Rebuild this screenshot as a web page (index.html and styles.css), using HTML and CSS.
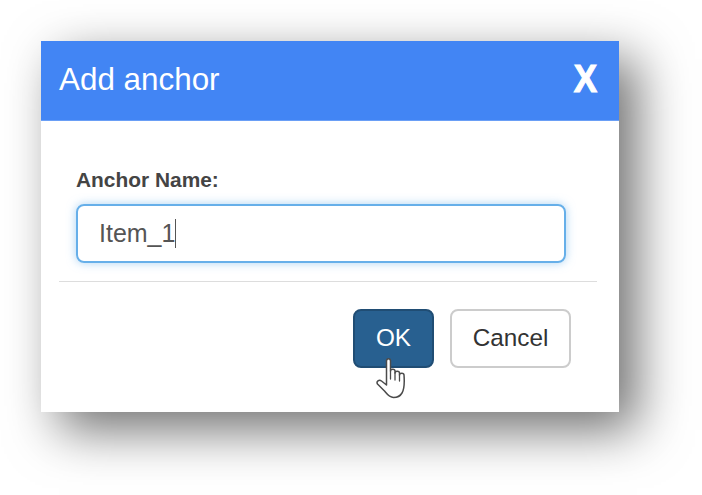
FILE: index.html
```html
<!DOCTYPE html>
<html lang="en">
<head>
  <meta charset="UTF-8" />
  <title>Add anchor</title>
  <link rel="stylesheet" href="styles.css">
</head>
<body>

  <div class="dialog">
    <div class="dialog-header">
      <div class="dialog-title">Add anchor</div>
      <div class="dialog-close">X</div>
    </div>

    <div class="dialog-body">
      <div class="field-label">Anchor Name:</div>
      <div class="field-input">Item_1<span class="caret"></span></div>
    </div>

    <div class="dialog-footer">
      <div class="btn btn-ok">
        OK
        <svg class="hand" width="32" height="41" viewBox="0 0 32 41">
          <path d="M10.5 3c0-3 4-3 4 0v10c0-2.5 4.5-2.5 4.5 0v2c0-2.5 4.5-2.5 4.5 0v2c0-2.5 4.5-2.5 4.5 0 0.5 7 1 13-2 18-2 3.500-5 4.500-8.500 4.500-4.500 0-6.500-3.500-9-6.500l-7-7c-1.500-2.500 1.500-5 4-3l5 4z" fill="#fff" stroke="#4b4b4b" stroke-width="1.5" stroke-linejoin="round"/>
          <path d="M14.500 13v8M19 15v7M23.500 17v6" fill="none" stroke="#4b4b4b" stroke-width="1.300" stroke-linecap="round"/>
        </svg>
      </div>
      <div class="btn btn-cancel">Cancel</div>
    </div>
  </div>

</body>
</html>
```

FILE: styles.css
```css
html {
  height: 100%;
}

body {
  box-sizing: border-box;
  height: 100%;
  margin: 0;
  padding: 41px;
  background: #fff;
  font-family: "Liberation Sans", Arial, sans-serif;
}

.dialog {
  width: 578px;
  height: 371px;
  background: #fff;
  box-shadow: 18px 18px 48px rgba(0, 0, 0, 0.56);
}

.dialog-header {
  display: flex;
  align-items: center;
  justify-content: space-between;
  box-sizing: border-box;
  height: 80px;
  padding: 0 22px 2px 18px;
  background: #4285f4;
  border-bottom: 1px solid #6a9ff6;
  color: #fff;
}

.dialog-title {
  font-size: 31.4px;
}

.dialog-close {
  margin-bottom: 3px;
  font-size: 35px;
  font-weight: 700;
  -webkit-text-stroke: 1px #fff;
  transform: scaleY(1.13);
}

.dialog-body {
  height: 161px;
  margin: 0 22px 0 18px;
  padding: 47px 0 0 17px;
  box-sizing: border-box;
  border-bottom: 1px solid #ddd;
}

.field-label {
  font-size: 20.900px;
  font-weight: 700;
  line-height: 24px;
  color: #444;
}

.field-input {
  display: flex;
  align-items: center;
  box-sizing: border-box;
  width: 490px;
  height: 59px;
  margin-top: 12px;
  padding-left: 21px;
  border: 2px solid #66afe9;
  border-radius: 8px;
  box-shadow: 0 0 10px rgba(102, 175, 233, 0.55);
  font-size: 25px;
  color: #555;
}

.caret {
  width: 1.500px;
  height: 29px;
  margin-left: -0.500px;
  background: #555;
}

.dialog-footer {
  display: flex;
  justify-content: flex-end;
  gap: 16px;
  padding: 27px 48px 0 0;
}

.btn {
  position: relative;
  box-sizing: border-box;
  height: 59px;
  line-height: 54px;
  text-align: center;
  font-size: 24.300px;
  border-radius: 8px;
}

.btn-ok {
  width: 81px;
  background: #286090;
  border: 2px solid #204d74;
  color: #fff;
}

.btn-cancel {
  width: 121px;
  background: #fff;
  border: 2px solid #ccc;
  color: #333;
}

.hand {
  position: absolute;
  left: 21px;
  top: 47px;
}
```
